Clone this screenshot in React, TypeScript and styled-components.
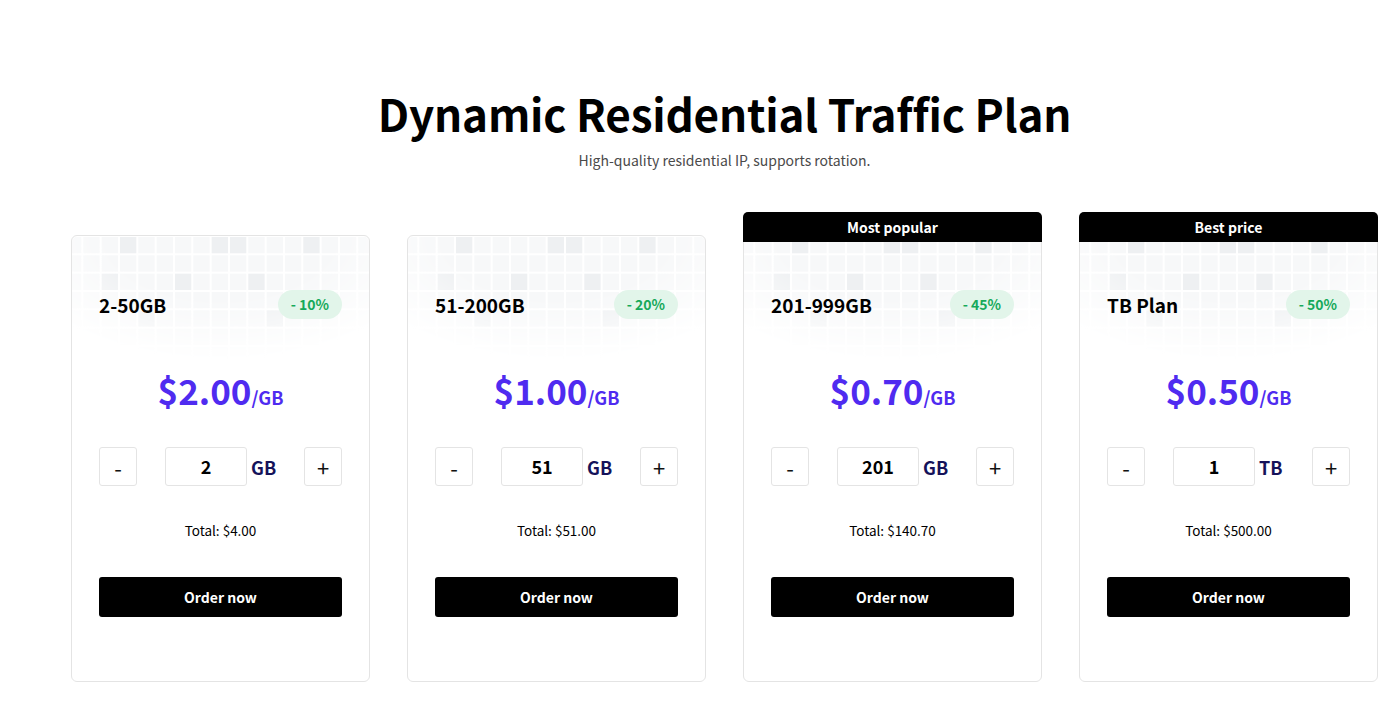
import styled, { createGlobalStyle } from 'styled-components'
import { useState } from 'react'

const GlobalStyle = createGlobalStyle`
    * { box-sizing: border-box; }
    body {
        margin: 0;
        background: #fff;
        font-family: 'Noto Sans CJK SC', 'Source Sans Pro', 'Noto Sans', sans-serif;
        color: #000;
    }
`

type Plan = {
    name: string
    discount: string
    price: string
    unit: string
    amount: number
    rate: number
    tag?: string
}

const plans: Plan[] = [
    { name: '2-50GB', discount: '- 10%', price: '$2.00', unit: 'GB', amount: 2, rate: 2 },
    { name: '51-200GB', discount: '- 20%', price: '$1.00', unit: 'GB', amount: 51, rate: 1 },
    { name: '201-999GB', discount: '- 45%', price: '$0.70', unit: 'GB', amount: 201, rate: 0.7, tag: 'Most popular' },
    { name: 'TB Plan', discount: '- 50%', price: '$0.50', unit: 'TB', amount: 1, rate: 500, tag: 'Best price' },
]

// tiles drawn a shade darker in the card header pattern: [row, col]
const darkTiles = [
    [0, 3], [0, 8], [0, 9], [0, 13],
    [2, 2], [2, 6], [2, 10],
    [4, 4], [4, 11],
]

const Page = styled.div`
    width: 1400px;
    padding: 83px 22px 0 71px;
`

const Heading = styled.h1`
    margin: 0;
    text-align: center;
    font-size: 44px;
    line-height: 60px;
    font-weight: 700;
    letter-spacing: -0.2px;
`

const Subheading = styled.p`
    margin: 6px 0 0;
    text-align: center;
    font-size: 14px;
    line-height: 22px;
    color: #4a4a4a;
`

const Cards = styled.div`
    display: grid;
    grid-template-columns: repeat(4, 299px);
    gap: 37px;
    margin-top: 64px;
`

const Card = styled.div`
    position: relative;
    height: 447px;
    border: 1px solid #e4e4e4;
    border-radius: 6px;
    background: #fff;
`

const Ribbon = styled.div`
    position: absolute;
    top: -24px;
    left: -1px;
    right: -1px;
    height: 30px;
    border-radius: 5px 5px 0 0;
    background: #000;
    color: #fff;
    font-size: 14px;
    font-weight: 700;
    line-height: 30px;
    text-align: center;
    z-index: 2;
`

const Pattern = styled.svg`
    position: absolute;
    top: 0;
    left: 0;
    width: 100%;
    height: 125px;
    border-radius: 6px 6px 0 0;
    mask-image: radial-gradient(ellipse 75% 100% at 50% 0%, #000 50%, transparent 100%);
    -webkit-mask-image: radial-gradient(ellipse 75% 100% at 50% 0%, #000 50%, transparent 100%);
`

const Head = styled.div`
    position: relative;
    display: flex;
    align-items: center;
    justify-content: space-between;
    padding: 54px 27px 0 27px;
`

const PlanName = styled.div`
    font-size: 19px;
    font-weight: 700;
    line-height: 29px;
`

const Discount = styled.div`
    height: 29px;
    padding: 0 13px;
    border-radius: 15px;
    background: #e2f5ea;
    color: #16a95a;
    font-size: 14px;
    font-weight: 700;
    line-height: 29px;
`

const Price = styled.div`
    display: flex;
    justify-content: center;
    align-items: baseline;
    height: 50px;
    margin-top: 46px;
    color: #4f2bf0;
    font-weight: 700;
`

const Amount = styled.span`
    font-size: 35px;
    line-height: 50px;
`

const PerUnit = styled.span`
    font-size: 18px;
    line-height: 50px;
`

const Stepper = styled.div`
    display: flex;
    align-items: center;
    margin: 32px 27px 0;
    height: 39px;
`

const StepButton = styled.button`
    width: 38px;
    height: 39px;
    padding: 0;
    border: 1px solid #e4e4e4;
    border-radius: 3px;
    background: #fff;
    font-family: inherit;
    font-size: 22px;
    color: #111;
    cursor: pointer;
`

const Quantity = styled.div`
    width: 82px;
    height: 39px;
    margin-left: 28px;
    border: 1px solid #e4e4e4;
    border-radius: 3px;
    text-align: center;
    font-size: 18px;
    font-weight: 700;
    line-height: 37px;
`

const Unit = styled.div`
    flex: 1;
    padding-left: 4px;
    color: #15125a;
    font-size: 18px;
    font-weight: 700;
`

const Total = styled.div`
    margin-top: 34px;
    text-align: center;
    font-size: 13.5px;
    line-height: 20px;
`

const OrderButton = styled.button`
    display: block;
    width: calc(100% - 54px);
    height: 40px;
    margin: 37px 27px 0;
    border: none;
    border-radius: 3px;
    background: #000;
    color: #fff;
    font-family: inherit;
    font-size: 14px;
    font-weight: 700;
    cursor: pointer;
`

const TilePattern = () => {
    const size = 18.33
    const rows = 7
    const cols = 17
    const tiles = []
    for (let r = 0; r < rows; r++) {
        for (let c = 0; c < cols; c++) {
            const dark = darkTiles.some(([dr, dc]) => dr === r && dc === c)
            tiles.push(
                <rect
                    key={`${r}-${c}`}
                    x={c * size - 8 + 1}
                    y={r * size + 1}
                    width={size - 2}
                    height={size - 2}
                    fill={dark ? '#eef0f2' : '#f7f8f9'}
                />
            )
        }
    }
    return (
        <Pattern viewBox="0 0 297 125" preserveAspectRatio="xMinYMin slice">
            {tiles}
        </Pattern>
    )
}

const PlanCard = ({ plan }: { plan: Plan }) => {
    const [amount, setAmount] = useState(plan.amount)
    const total = (amount * plan.rate).toFixed(2)

    return (
        <Card>
            {plan.tag && <Ribbon>{plan.tag}</Ribbon>}
            <TilePattern />
            <Head>
                <PlanName>{plan.name}</PlanName>
                <Discount>{plan.discount}</Discount>
            </Head>
            <Price>
                <Amount>{plan.price}</Amount>
                <PerUnit>/GB</PerUnit>
            </Price>
            <Stepper>
                <StepButton onClick={() => setAmount(Math.max(plan.amount, amount - 1))}>-</StepButton>
                <Quantity>{amount}</Quantity>
                <Unit>{plan.unit}</Unit>
                <StepButton onClick={() => setAmount(amount + 1)}>+</StepButton>
            </Stepper>
            <Total>Total: ${total}</Total>
            <OrderButton>Order now</OrderButton>
        </Card>
    )
}

const App = () => (
    <Page>
        <GlobalStyle />
        <Heading>Dynamic Residential Traffic Plan</Heading>
        <Subheading>High-quality residential IP, supports rotation.</Subheading>
        <Cards>
            {plans.map((plan) => (
                <PlanCard key={plan.name} plan={plan} />
            ))}
        </Cards>
    </Page>
)

export default App
